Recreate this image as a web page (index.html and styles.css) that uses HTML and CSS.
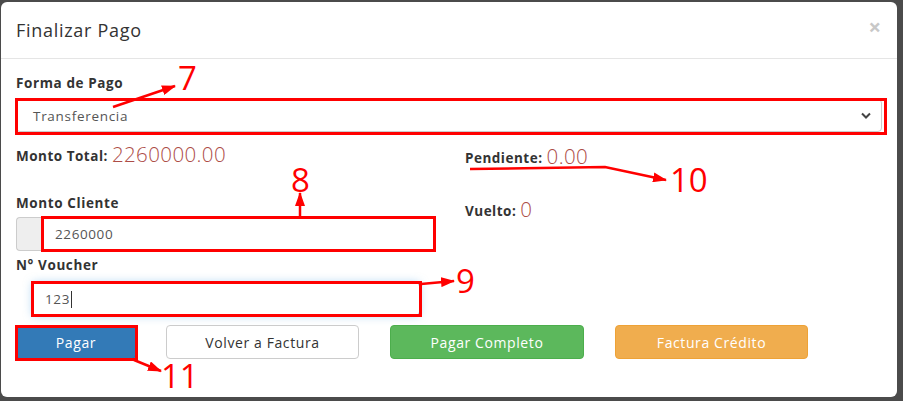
FILE: index.html
```html
<!DOCTYPE html>
<html lang="es">
<head>
<meta charset="utf-8">
<title>Finalizar Pago</title>
<link rel="stylesheet" href="styles.css">
</head>
<body>
<div class="backdrop">
  <div class="modal">
    <div class="modal-header">
      <h4 class="modal-title">Finalizar Pago</h4>
      <span class="close">&times;</span>
    </div>
    <div class="modal-body">
      <label class="lbl">Forma de Pago</label>
      <div class="select">
        <span>Transferencia</span>
        <svg class="chev" width="10" height="7" viewBox="0 0 10 7"><path d="M1 1.5 L5 5.5 L9 1.5" fill="none" stroke="#444" stroke-width="2"/></svg>
      </div>
      <div class="cols">
        <div class="col-left">
          <div class="total"><b>Monto Total:</b> <span class="val">2260000.00</span></div>
          <label class="lbl lbl-cliente">Monto Cliente</label>
          <div class="input-group">
            <span class="addon"></span>
            <div class="input">2260000</div>
          </div>
          <label class="lbl lbl-voucher">N° Voucher</label>
          <div class="input voucher">123<span class="caret"></span></div>
        </div>
        <div class="col-right">
          <div class="pend"><b>Pendiente:</b> <span class="val">0.00</span></div>
          <div class="vuelto"><b>Vuelto:</b> <span class="val">0</span></div>
        </div>
      </div>
      <div class="buttons">
        <button class="btn btn-primary">Pagar</button>
        <button class="btn btn-default">Volver a Factura</button>
        <button class="btn btn-success">Pagar Completo</button>
        <button class="btn btn-warning">Factura Crédito</button>
      </div>
    </div>
  </div>
  <svg class="annot" width="903" height="401" viewBox="0 0 903 401">
    <defs>
      <marker id="ahb" markerWidth="14" markerHeight="10" refX="13" refY="5" orient="auto" markerUnits="userSpaceOnUse">
        <path d="M0 0 L14 5 L0 10 Z" fill="#f00"/>
      </marker>
    </defs>
    <g fill="none" stroke="#f00" stroke-width="3">
      <rect x="16.5" y="99.5" width="869" height="34"/>
      <rect x="42.5" y="217.5" width="392" height="33"/>
      <rect x="32.5" y="282.5" width="388" height="33"/>
      <rect x="16.5" y="326.5" width="120" height="33"/>
    </g>
    <g fill="none" stroke="#f00" stroke-width="2.5">
      <line x1="113" y1="107" x2="175" y2="86" marker-end="url(#ahb)"/>
      <line x1="300" y1="216" x2="300" y2="193" marker-end="url(#ahb)"/>
      <line x1="421" y1="284" x2="454" y2="281" marker-end="url(#ahb)"/>
      <polyline points="470,169 605,167 666,180" marker-end="url(#ahb)"/>
      <line x1="134" y1="360" x2="161" y2="371" marker-end="url(#ahb)"/>
    </g>
    <g class="num" fill="#f00">
      <text x="178" y="90">7</text>
      <text x="291" y="192">8</text>
      <text x="456" y="293">9</text>
      <text x="670" y="192">10</text>
      <text x="161" y="388">11</text>
    </g>
  </svg>
</div>
</body>
</html>
```

FILE: styles.css
```css
* { box-sizing: border-box; }
html, body { margin: 0; padding: 0; }
body {
  background: #4b4b4b;
  font-family: "Open Sans", "Liberation Sans", sans-serif;
  color: #333;
  width: 903px;
  height: 401px;
  overflow: hidden;
}
.backdrop {
  position: relative;
  width: 903px;
  height: 401px;
  padding: 2px 6px 4px 1px;
}
.modal {
  width: 896px;
  height: 395px;
  background: #fff;
  border-radius: 6px;
  display: flex;
  flex-direction: column;
}
.modal-header {
  height: 57px;
  border-bottom: 1px solid #e5e5e5;
  display: flex;
  align-items: center;
  justify-content: space-between;
  padding: 0 15px 0 15px;
}
.modal-title {
  margin: 0;
  font-size: 18px;
  font-weight: 400;
  color: #333;
  letter-spacing: 0.7px;
}
.close {
  color: #c8c8c8;
  font-size: 22px;
  font-weight: 700;
  line-height: 1;
  margin-top: -8px;
  margin-right: 1px;
}
.modal-body {
  padding: 14px 15px 15px 15px;
}
.lbl {
  display: block;
  font-size: 13.5px;
  font-weight: 700;
  line-height: 20px;
  color: #333;
  margin-bottom: 6px;
  letter-spacing: 0.6px;
}
.select {
  height: 33px;
  border: 1px solid #ccc;
  border-radius: 4px;
  display: flex;
  align-items: center;
  justify-content: space-between;
  padding: 0 10px 0 16px;
  font-size: 13.5px;
  letter-spacing: 0.7px;
  color: #555;
}
.cols {
  display: grid;
  grid-template-columns: 418px 418px;
  column-gap: 30px;
}
.col-left { display: flex; flex-direction: column; }
.total, .pend, .vuelto {
  font-size: 13.5px;
  line-height: 24px;
  letter-spacing: 0.5px;
}
.total b, .pend b, .vuelto b { font-weight: 700; color: #333; }
.val {
  color: #ad4d47;
  font-size: 20.5px;
  font-weight: 300;
  letter-spacing: 0.4px;
  vertical-align: -1px;
}
.total { margin-top: 10px; }
.pend { margin-top: 12px; margin-left: 1px; }
.vuelto { margin-top: 27px; margin-left: 1px; }
.lbl-cliente { margin-top: 25px; margin-bottom: 4px; }
.input-group {
  display: flex;
  height: 34px;
}
.addon {
  width: 26px;
  background: #eee;
  border: 1px solid #ccc;
  border-right: none;
  border-radius: 4px 0 0 4px;
}
.input {
  flex: 1;
  height: 34px;
  border: 1px solid #ccc;
  display: flex;
  align-items: center;
  padding-left: 12px;
  font-size: 13.5px;
  letter-spacing: 0.6px;
  color: #555;
}
.lbl-voucher { margin-top: 4px; margin-bottom: 7px; }
.voucher {
  flex: none;
  margin-left: 16px;
  width: 388px;
  border-color: #66afe9;
  border-radius: 4px;
  box-shadow: 0 0 8px rgba(102,175,233,.5);
}
.caret {
  display: inline-block;
  width: 1px;
  height: 17px;
  background: #333;
  margin-left: 1px;
}
.buttons {
  display: flex;
  margin-top: 9px;
}
.btn {
  font-family: inherit;
  height: 34px;
  width: 194px;
  border: 1px solid transparent;
  border-radius: 4px;
  font-size: 14px;
  letter-spacing: 0.6px;
  color: #fff;
  padding: 0;
  margin-left: 31px;
}
.btn-primary { width: 120px; margin-left: 0; background: #337ab7; border-color: #2e6da4; }
.btn-default { width: 193px; margin-left: 30px; background: #fff; border-color: #ccc; color: #333; }
.btn-success { background: #5cb85c; border-color: #4cae4c; }
.btn-warning { width: 193px; background: #f0ad4e; border-color: #eea236; }
.annot {
  position: absolute;
  left: 0;
  top: 0;
  pointer-events: none;
}
.num text {
  font-family: "Open Sans", "Liberation Sans", sans-serif;
  font-size: 33px;
  font-weight: 400;
}
```
